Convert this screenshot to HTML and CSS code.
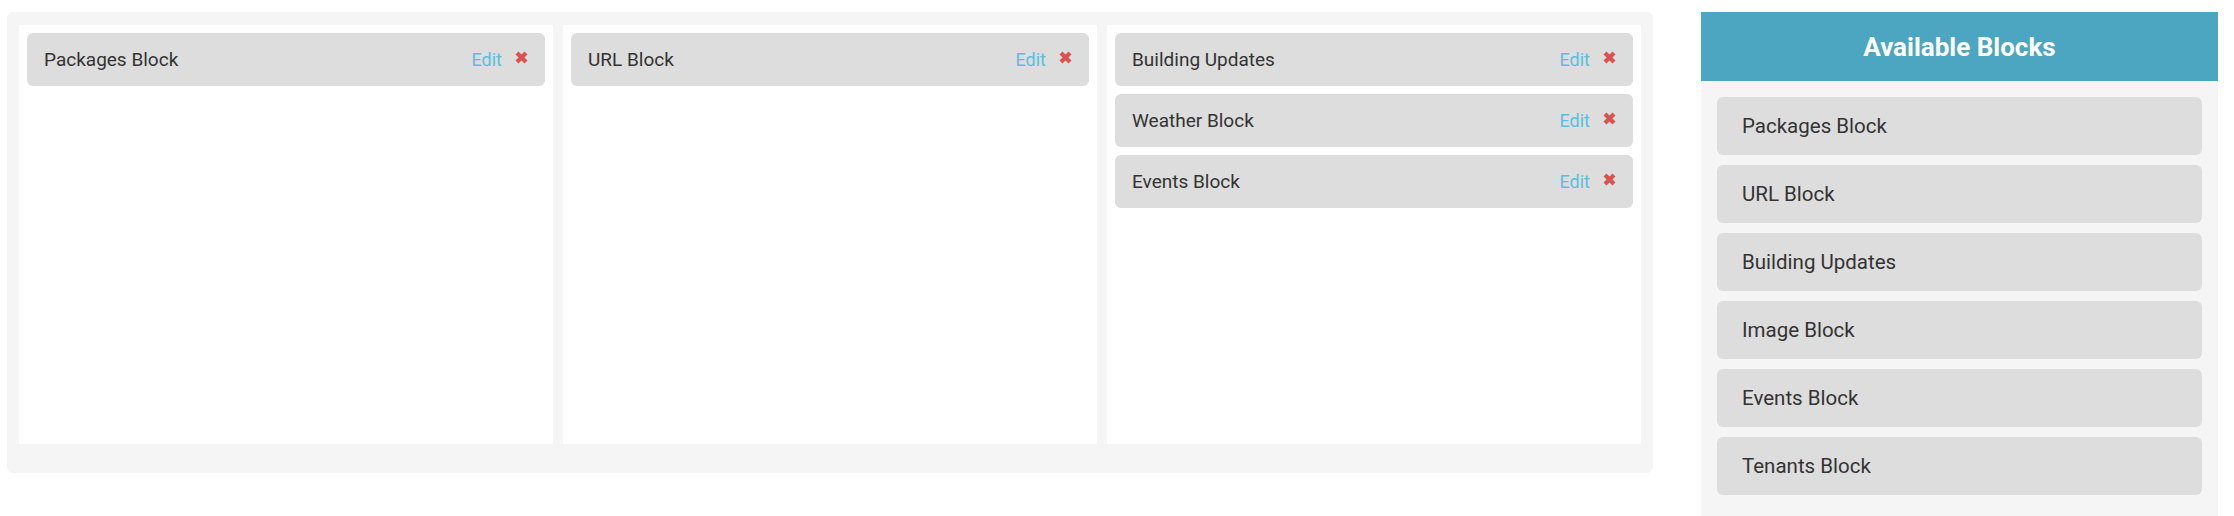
FILE: index.html
```html
<!DOCTYPE html>
<html lang="en">
<head>
<meta charset="utf-8">
<title>Blocks</title>
<link rel="stylesheet" href="styles.css">
</head>
<body>
<div class="page">
  <div class="board">
    <div class="column">
      <div class="card"><span class="card-name">Packages Block</span><span class="actions"><a class="edit">Edit</a><svg class="remove" viewBox="0 0 13 13"><path d="M2 2 L11 11 M11 2 L2 11"/></svg></span></div>
    </div>
    <div class="column">
      <div class="card"><span class="card-name">URL Block</span><span class="actions"><a class="edit">Edit</a><svg class="remove" viewBox="0 0 13 13"><path d="M2 2 L11 11 M11 2 L2 11"/></svg></span></div>
    </div>
    <div class="column">
      <div class="card"><span class="card-name">Building Updates</span><span class="actions"><a class="edit">Edit</a><svg class="remove" viewBox="0 0 13 13"><path d="M2 2 L11 11 M11 2 L2 11"/></svg></span></div>
      <div class="card"><span class="card-name">Weather Block</span><span class="actions"><a class="edit">Edit</a><svg class="remove" viewBox="0 0 13 13"><path d="M2 2 L11 11 M11 2 L2 11"/></svg></span></div>
      <div class="card"><span class="card-name">Events Block</span><span class="actions"><a class="edit">Edit</a><svg class="remove" viewBox="0 0 13 13"><path d="M2 2 L11 11 M11 2 L2 11"/></svg></span></div>
    </div>
  </div>
  <aside class="sidebar">
    <div class="sidebar-header">Available Blocks</div>
    <div class="sidebar-body">
      <div class="item">Packages Block</div>
      <div class="item">URL Block</div>
      <div class="item">Building Updates</div>
      <div class="item">Image Block</div>
      <div class="item">Events Block</div>
      <div class="item">Tenants Block</div>
    </div>
  </aside>
</div>
</body>
</html>
```

FILE: styles.css
```css
html, body {
  margin: 0;
  padding: 0;
  background: #fff;
  font-family: Roboto, "Liberation Sans", sans-serif;
  color: #333;
}

.page {
  display: flex;
  align-items: flex-start;
  gap: 48px;
  padding: 12px 0 0 7px;
}

.board {
  box-sizing: border-box;
  width: 1646px;
  background: #f5f5f5;
  border-radius: 6px;
  padding: 13px 12px 29px 12px;
  display: grid;
  grid-template-columns: repeat(3, 534px);
  gap: 10px;
}

.column {
  box-sizing: border-box;
  background: #fff;
  min-height: 419px;
  padding: 8px;
  display: flex;
  flex-direction: column;
  gap: 8px;
}

.card {
  box-sizing: border-box;
  height: 53px;
  background: #dddddd;
  border-radius: 6px;
  padding: 0 17px;
  display: flex;
  align-items: center;
  justify-content: space-between;
  font-size: 19px;
}

.actions {
  display: flex;
  align-items: center;
  gap: 13px;
}

.edit {
  color: #5bc0de;
  font-size: 18px;
  cursor: pointer;
}

.remove {
  width: 13px;
  height: 13px;
  margin-top: -5px;
}

.remove path {
  stroke: #d9534f;
  stroke-width: 4.2;
  stroke-linecap: butt;
  fill: none;
}

.sidebar {
  width: 517px;
}

.sidebar-header {
  height: 69px;
  background: #4ca6c2;
  color: #fff;
  font-weight: 700;
  font-size: 26px;
  display: flex;
  align-items: center;
  justify-content: center;
}

.sidebar-body {
  background: #f5f5f5;
  padding: 16px 16px 24px;
  display: flex;
  flex-direction: column;
  gap: 10px;
}

.item {
  box-sizing: border-box;
  height: 58px;
  background: #dddddd;
  border-radius: 6px;
  padding-left: 25px;
  display: flex;
  align-items: center;
  font-size: 20.5px;
}
```
